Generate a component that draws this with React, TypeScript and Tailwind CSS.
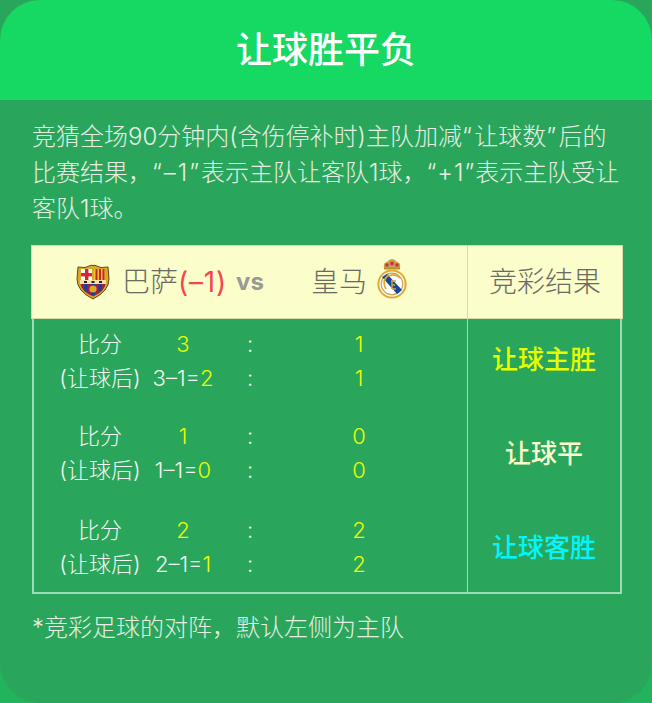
const latinCjk = { fontFamily: 'Inter, "Noto Sans CJK SC", sans-serif' };

function Barca() {
  return (
    <svg width="34" height="36" viewBox="0 0 34 36" className="shrink-0">
      <path d="M2 3 Q9 5 16 1 L17 2 L18 1 Q25 5 32 3 L33 15 Q33 27 17 35 Q1 27 1 15 Z" fill="#d9a927" stroke="#5f4712" strokeWidth="1" />
      <rect x="5" y="5" width="11" height="11" fill="#fff" />
      <rect x="9" y="5" width="3.4" height="11" fill="#d8262f" />
      <rect x="5" y="9" width="11" height="3.4" fill="#d8262f" />
      <rect x="18" y="5" width="11" height="11" fill="#f0c52c" />
      <rect x="19.5" y="5" width="2" height="11" fill="#c9252e" />
      <rect x="23" y="5" width="2" height="11" fill="#c9252e" />
      <rect x="26.5" y="5" width="2" height="11" fill="#c9252e" />
      <rect x="4" y="16" width="26" height="4" fill="#f3e3a5" />
      <rect x="8" y="17" width="3" height="2" fill="#222" />
      <rect x="15.5" y="17" width="3" height="2" fill="#222" />
      <rect x="23" y="17" width="3" height="2" fill="#222" />
      <path d="M4.5 20 H29.5 Q29 27 17 32.5 Q5 27 4.5 20 Z" fill="#a21f45" />
      <path d="M8 20 H11.5 V28 L8 26 Z M15 20 H19 V31 H15 Z M22.5 20 H26 V26 L22.5 28 Z" fill="#1f3f94" />
      <circle cx="17" cy="25" r="3.6" fill="#d9a927" />
    </svg>
  );
}

function Madrid() {
  return (
    <svg width="30" height="42" viewBox="0 0 30 42" className="shrink-0">
      <path d="M7 12 Q6 5 10 5 Q12 2 15 2 Q18 2 20 5 Q24 5 23 12 Z" fill="#c9a24a" />
      <circle cx="10" cy="8" r="1.8" fill="#c9344b" />
      <circle cx="15" cy="6.5" r="2" fill="#c9344b" />
      <circle cx="20" cy="8" r="1.8" fill="#c9344b" />
      <rect x="7" y="10.5" width="16" height="2" fill="#b98f2f" />
      <circle cx="15" cy="27" r="13.6" fill="#fff" stroke="#dfa92d" strokeWidth="2" />
      <circle cx="15" cy="27" r="10.8" fill="#fff" stroke="#c9a24a" strokeWidth="1.2" />
      <path d="M5 20 L10 17 L25 33 L20 37 Z" fill="#14489a" />
      <path d="M9 32 Q4 23 12 18" fill="none" stroke="#dfa92d" strokeWidth="1.6" />
      <path d="M23 21 Q18 16 12 19" fill="none" stroke="#dfa92d" strokeWidth="1.6" />
      <path d="M14 24 H19 M15 24 V32 M15 28 H18 M15 32 H19" stroke="#dfa92d" strokeWidth="1.4" fill="none" />
    </svg>
  );
}

type Group = { s1: string; eq: string; r: string; s2: string; result: string; color: string };

const groups: Group[] = [
  { s1: "3", eq: "3–1=", r: "2", s2: "1", result: "让球主胜", color: "text-[#e6ff00]" },
  { s1: "1", eq: "1–1=", r: "0", s2: "0", result: "让球平", color: "text-[#fbfdcb]" },
  { s1: "2", eq: "2–1=", r: "1", s2: "2", result: "让球客胜", color: "text-[#00f6ff]" },
];

function ScoreRow({ label, mid, midExtra, right }: { label: string; mid: string; midExtra?: string; right: string }) {
  return (
    <div className="grid h-[34px] grid-cols-[112px_74px_60px_158px] items-center text-[22px] font-light text-[#f3f8f3]">
      <div className="pl-[20px] text-center whitespace-nowrap">{label}</div>
      <div className="text-center whitespace-nowrap">
        {midExtra ? midExtra : null}
        <span className="text-[#e6ff00]">{mid}</span>
      </div>
      <div className="text-center">:</div>
      <div className="text-center text-[#e6ff00]">{right}</div>
    </div>
  );
}

export default function App() {
  return (
    <div className="h-[703px] w-[652px] overflow-hidden bg-[#22b45c]" style={latinCjk}>
      <div className="flex h-full flex-col rounded-b-[40px] bg-[#29a65b]">
        <div className="flex h-[100px] shrink-0 items-center justify-center rounded-t-[40px] bg-[#15d962] text-[36px] font-medium text-white">
          让球胜平负
        </div>
        <p className="mx-[32px] mt-[19px] w-[592px] text-[24px] leading-[36px] font-light whitespace-nowrap text-[#e6eee4]">
          竞猜全场90分钟内(含伤停补时)主队加减<span className="tracking-[2.5px]">“</span>让球数<span className="tracking-[2.5px]">”</span>后的
          <br />
          比赛结果，<span className="tracking-[2px]">“–1”</span>表示主队让客队1球，<span className="tracking-[1px]">“+1”</span>表示主队受让
          <br />
          客队1球。
        </p>
        <div className="mx-[31px] mt-[18px] w-[592px]">
          <div className="flex h-[74px] border border-[#d5dba9] bg-[#fbfdcb] text-[28px] font-light text-[#6b6b62]">
            <div className="flex w-[435px] items-center">
              <div className="ml-[44px] flex items-center">
                <Barca />
                <span className="ml-[12px]">巴萨</span>
                <span className="font-normal tracking-[0.8px] text-[#f5474b]">(–1)</span>
                <span className="ml-[9px] text-[24px] font-bold text-[#9a9a94]">vs</span>
              </div>
              <span className="ml-[47px]">皇马</span>
              <div className="mb-[8px] ml-[10px]"><Madrid /></div>
            </div>
            <div className="flex flex-1 items-center justify-center border-l border-[#d5dba9]">竞彩结果</div>
          </div>
          <div className="mx-[1px] flex h-[275px] border-x-2 border-b-2 border-[#9fdcb6]">
            <div className="flex w-[433px] flex-col pt-[8px]">
              {groups.map((g, i) => (
                <div key={g.result} className={i === 0 ? "" : i === 1 ? "mt-[24px]" : "mt-[26px]"}>
                  <ScoreRow label="比分" mid={g.s1} right={g.s2} />
                  <ScoreRow label="(让球后)" midExtra={g.eq} mid={g.r} right={g.s2} />
                </div>
              ))}
            </div>
            <div className="flex flex-1 flex-col border-l border-[#9fdcb6] text-center text-[26px] font-medium">
              {groups.map((g, i) => (
                <div key={g.result} className={`${g.color} ${i === 0 ? "mt-[23px]" : "mt-[58px]"} leading-[36px]`}>
                  {g.result}
                </div>
              ))}
            </div>
          </div>
        </div>
        <p className="mx-[32px] mt-[16px] text-[24px] leading-[36px] font-light text-[#e6eee4]">*竞彩足球的对阵，默认左侧为主队</p>
      </div>
    </div>
  );
}
